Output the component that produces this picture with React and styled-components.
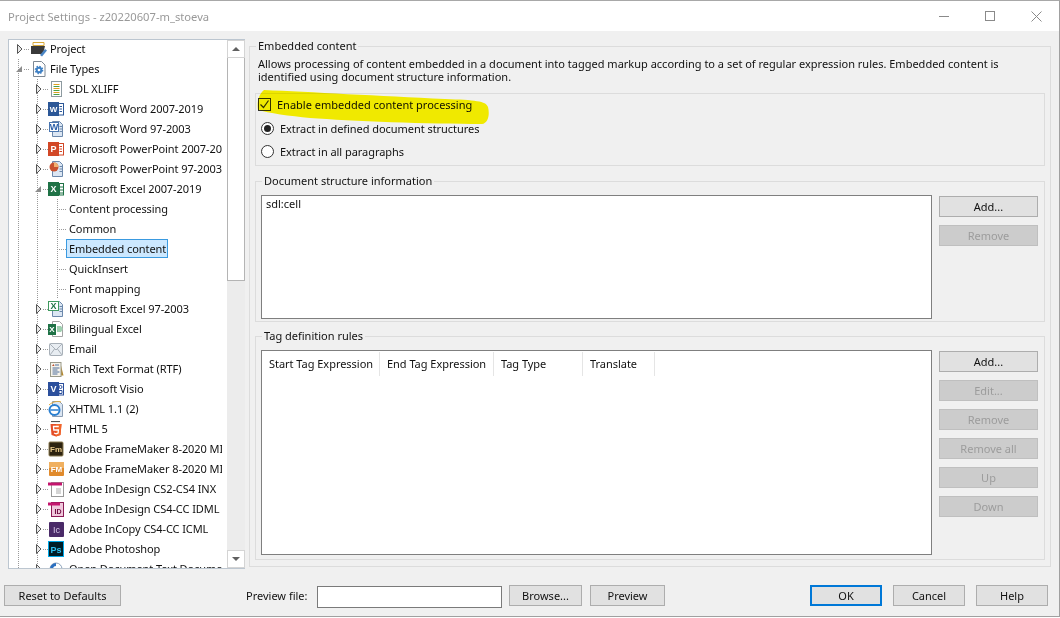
import React from "react";
import styled, { createGlobalStyle } from "styled-components";

const Global = createGlobalStyle`
  html, body { margin: 0; padding: 0; background: #fff; }
  body { font-family: "Noto Sans", "Open Sans", sans-serif; font-size: 11px; color: #111; }
`;

const Win = styled.div`
  width: 1060px; height: 617px; box-sizing: border-box;
  border-top: 1px solid #a8a8a8; border-right: 1px solid #a0a0a0; border-bottom: 1px solid #a0a0a0;
  background: #f0f0f0; display: flex; flex-direction: column; position: relative; overflow: hidden;
`;
const TitleBar = styled.div`
  height: 30px; flex: none; background: #fff; display: flex; align-items: center; padding-left: 8px;
  color: #999; font-size: 11.2px;
`;
const TitleText = styled.span` flex: 1; `;
const Caption = styled.span`
  width: 46px; height: 30px; display: flex; align-items: center; justify-content: center;
`;
const Main = styled.div`
  flex: 1; min-height: 0; display: flex; gap: 4px; padding: 8px 8px 0 8px;
`;
const Tree = styled.div`
  width: 237px; height: 530px; box-sizing: border-box; flex: none; display: flex;
  border: 1px solid #bcc6d0; background: #fff;
`;
const TreeList = styled.div`
  width: 213px; margin: -1px 5px 0 0; overflow: hidden; flex: none;
`;

const dots = (x) =>
  `linear-gradient(#9a9a9a 50%, transparent 50%) ${x}px 0 / 1px 2px repeat-y`;
const Row = styled.div`
  height: 20px; display: flex; align-items: center; white-space: nowrap; box-sizing: border-box;
  padding-left: ${(p) => p.$pad}px;
  background: ${(p) => p.$guides.map(dots).join(",") || "none"};
`;
const Expander = styled.svg` width: ${(p) => p.$w}px; height: 10px; flex: none; margin-left: ${(p) => p.$ml}px; `;
const Tick = styled.span`
  flex: none; width: ${(p) => p.$w}px; margin: 0 ${(p) => p.$mr}px 0 ${(p) => p.$ml}px; height: 1px;
  background: repeating-linear-gradient(90deg, #9a9a9a 0 1px, transparent 1px 2px);
`;
const IconBox = styled.svg` width: 16px; height: 16px; flex: none; margin-right: ${(p) => p.$mr}px; `;
const Label = styled.span`
  flex: none; line-height: 17px; letter-spacing: -0.08px; margin-top: -2px;
  ${(p) => p.$selected && `
    background: #cce8ff; border: 1px solid #3a9ae0; height: 17px; margin-left: -3px; padding: 0 0 0 2px; width: 98px;
  `}
`;
const Scroll = styled.div`
  width: 18px; flex: none; background: #ececec; display: flex; flex-direction: column;
`;
const ScrollBtn = styled.div`
  height: 18px; flex: none; background: #fff; border: 1px solid #d4d4d4; box-sizing: border-box;
  display: flex; align-items: center; justify-content: center;
`;
const Arrow = styled.span`
  width: 0; height: 0; border-left: 4px solid transparent; border-right: 4px solid transparent;
  ${(p) => (p.$up ? "border-bottom: 4px solid #606060;" : "border-top: 4px solid #606060;")}
`;
const Thumb = styled.div`
  height: 223px; flex: none; background: #fff; border: 1px solid #b4b4b4; border-top: none; box-sizing: border-box;
`;
const Track = styled.div` flex: 1; `;

const Group = styled.fieldset`
  margin: 0; padding: ${(p) => p.$pad}; border: 1px solid #dcdcdc; min-width: 0; box-sizing: border-box;
  ${(p) => p.$outer && "width: 802px; height: 528px; flex: none;"}
  ${(p) => p.$h && `height: ${p.$h}px; flex: none;`}
  ${(p) => p.$mt && `margin-top: ${p.$mt}px;`}
`;
const Legend = styled.legend`
  margin-left: 1px; padding: 0 2px; line-height: 14px; color: #111;
`;
const Desc = styled.div` line-height: 13px; margin: 4px 0 0 3px; height: 26px; `;
const OptionPanel = styled.div`
  margin-top: 10px; height: 73px; border: 1px solid #dcdcdc; box-sizing: border-box;
  display: flex; flex-direction: column; padding: 3px 0 0 2px;
`;
const CheckRow = styled.label` display: flex; align-items: center; height: 14px; gap: 6px; `;
const CheckBoxBox = styled.span`
  width: 13px; height: 13px; box-sizing: border-box; border: 1px solid #333; display: flex; flex: none;
  align-items: center; justify-content: center;
`;
const RadioRow = styled.label`
  display: flex; align-items: center; height: 14px; gap: 6px; margin: ${(p) => p.$mt}px 0 0 3px; letter-spacing: -0.05px;
`;
const Radio = styled.span`
  width: 13px; height: 13px; box-sizing: border-box; border: 1px solid #333; border-radius: 50%;
  background: #fff; display: flex; align-items: center; justify-content: center; flex: none;
  &::after { content: ""; width: 7px; height: 7px; border-radius: 50%; background: ${(p) => (p.$on ? "#222" : "transparent")}; }
`;
const Split = styled.div` display: flex; gap: 7px; `;
const ListBox = styled.div`
  width: 671px; height: ${(p) => p.$h}px; box-sizing: border-box; flex: none; line-height: 15px;
  border: 1px solid #7f7f7f; background: #fff; padding: ${(p) => p.$pad};
`;
const Header = styled.div` display: flex; height: 24px; `;
const Col = styled.div`
  width: ${(p) => p.$w}px; box-sizing: border-box; padding-left: 7px; border-right: 1px solid #e5e5e5;
  line-height: 24px; flex: none; white-space: nowrap; letter-spacing: -0.03px;
`;
const Buttons = styled.div` display: flex; flex-direction: column; gap: 8px; padding-top: 1px; `;
const Btn = styled.button`
  font: inherit; color: ${(p) => (p.disabled ? "#9c9c9c" : "#111")};
  width: ${(p) => p.$w || 99}px; height: 21px; padding: 0; flex: none; box-sizing: border-box;
  background: ${(p) => (p.disabled ? "#cccccc" : "#e1e1e1")};
  border: ${(p) => (p.$primary ? "2px solid #0078d7" : p.disabled ? "1px solid #bfbfbf" : "1px solid #adadad")};
  margin-left: ${(p) => p.$ml || 0}px; border-radius: 0;
`;
const Footer = styled.div` height: 49px; box-sizing: border-box; flex: none; display: flex; align-items: flex-start; padding: 18px 0 0 4px; `;
const FooterLabel = styled.span` margin-left: 125px; width: 71px; flex: none; line-height: 22px; `;
const Input = styled.div`
  width: 185px; height: 22px; margin-top: 1px; box-sizing: border-box; background: #fff; border: 1px solid #7a7a7a; flex: none;
`;
const Highlight = styled.svg`
  position: absolute; left: 250px; top: 84px; width: 245px; height: 45px; mix-blend-mode: multiply; pointer-events: none;
`;

/* ---- small drawn file-type icons ---- */
const Doc = ({ fill = "#fff", stroke = "#9aa3ad" }) => (
  <path d="M4.5 .5h7l3 3v12h-10z" fill={fill} stroke={stroke} />
);
const Tile = ({ c, t, x = 0, y = 3, w = 11, h = 11, tc = "#fff", fs = 8 }) => (
  <>
    <rect x={x} y={y} width={w} height={h} fill={c} />
    <text x={x + w / 2} y={y + h / 2 + fs * 0.36} fontSize={fs} fontWeight="700" fontFamily="Liberation Sans, sans-serif" textAnchor="middle" fill={tc}>{t}</text>
  </>
);
const Lines = ({ c = "#7c8ea5" }) => (
  <path d="M11.500 5.500h2.500M11.500 8h2.500M11.500 10.500h2.500" stroke={c} fill="none" />
);
const icons = {
  project: (
    <>
      <path d="M2 1.500h11v3H2z" fill="#fff" stroke="#d9a93a" />
      <path d="M0 5h14l-2 8H0z" fill="#3a3a3a" />
      <path d="M9 14l5-6 2 1.500-5 6z" fill="#4a86c5" />
    </>
  ),
  filetypes: (
    <>
      <path d="M2.500 .5h8l3.500 3.500v11.500h-11.500z" fill="#fff" stroke="#7d8894" />
      <circle cx="8" cy="9" r="3.300" fill="#3d7fc4" />
      <circle cx="8" cy="9" r="3.600" fill="none" stroke="#3d7fc4" strokeWidth="1.400" strokeDasharray="1.500 1.300" />
      <circle cx="8" cy="9" r="1.300" fill="#fff" />
    </>
  ),
  xliff: (
    <>
      <rect x="3.500" y=".5" width="10" height="15" fill="#fff" stroke="#8d9aa0" />
      <path d="M5.500 3.500h6" stroke="#e0a020" />
      <path d="M5.500 5.500h6" stroke="#4aa14a" />
      <path d="M5.500 7.500h6" stroke="#e0a020" />
      <path d="M5.500 9.500h6" stroke="#4aa14a" />
      <path d="M5.500 11.500h6" stroke="#e0a020" />
      <path d="M5.500 13.500h6" stroke="#4aa14a" />
    </>
  ),
  word: (
    <>
      <rect x="8" y="2.500" width="7.500" height="11.500" fill="#fff" stroke="#2b5797" />
      <Lines c="#2b5797" />
      <Tile c="#2b5797" t="W" y={1} w={11} h={14} fs={8} />
    </>
  ),
  word97: (
    <>
      <Doc fill="#dbe6f3" stroke="#6c88ab" />
      <Lines c="#6c88ab" />
      <Tile c="#fff" t="W" x={1} y={1} w={10} h={10} tc="#2b5fa8" fs={9} />
      <rect x="1.500" y="1.500" width="9" height="9" fill="none" stroke="#4a76b0" />
    </>
  ),
  ppt: (
    <>
      <rect x="8" y="2.500" width="7.500" height="11.500" fill="#fff" stroke="#d24726" />
      <Lines c="#d24726" />
      <Tile c="#d24726" t="P" y={1} w={11} h={14} fs={9} />
    </>
  ),
  ppt97: (
    <>
      <Doc fill="#dbe6f3" stroke="#6c88ab" />
      <Lines c="#6c88ab" />
      <circle cx="6" cy="6" r="4.500" fill="#c8502e" />
      <path d="M6 6V1.500A4.500 4.500 0 0 1 10.500 6z" fill="#f0b070" />
    </>
  ),
  excel: (
    <>
      <rect x="8" y="2.500" width="7.500" height="11.500" fill="#fff" stroke="#1f7246" />
      <path d="M11.500 3v11M8 6h7M8 9h7M8 12h7" stroke="#1f7246" />
      <Tile c="#1f7246" t="X" y={1} w={11} h={14} fs={9} />
    </>
  ),
  excel97: (
    <>
      <Doc fill="#dbe6f3" stroke="#6c88ab" />
      <Lines c="#6c88ab" />
      <Tile c="#fff" t="X" x={0} y={0} w={11} h={10} tc="#1f7246" fs={9} />
      <rect x=".5" y=".5" width="10" height="9" fill="none" stroke="#3f9a5f" />
    </>
  ),
  bilingual: (
    <>
      <Doc fill="#fff" stroke="#a4a4a4" />
      <path d="M9 5h4l2 3-2 3H9z" fill="#9fd0b0" />
      <Tile c="#1f7246" t="X" y={3} w={8} h={11} fs={8} />
    </>
  ),
  email: (
    <>
      <rect x="1.500" y="2.500" width="13" height="12" rx="1" fill="#e8edf2" stroke="#a8b0b8" />
      <path d="M2 3l6 6 6-6M2 14l4.500-6M14 14l-4.500-6" stroke="#a8b0b8" fill="none" />
    </>
  ),
  rtf: (
    <>
      <path d="M12 .5l3.500 14H13z" fill="#b5892f" />
      <rect x="2.500" y="1.500" width="10.500" height="14" fill="#f6f3ea" stroke="#9a9a8a" />
      <path d="M7 4h4M4.500 7h7M4.500 9h5M4.500 11h7M4.500 13h5" stroke="#4f6e9c" fill="none" />
      <path d="M4 5l1.500-2L6.500 5z" fill="#c05030" />
    </>
  ),
  visio: (
    <>
      <rect x="8" y="2.500" width="7.500" height="11.500" fill="#fff" stroke="#2b4f9c" />
      <circle cx="12.500" cy="6" r="1.500" fill="none" stroke="#2b4f9c" />
      <path d="M11 9.500h3v3h-3z" fill="none" stroke="#2b4f9c" />
      <Tile c="#2b4f9c" t="V" y={1} w={11} h={14} fs={9} />
    </>
  ),
  xhtml: (
    <>
      <Doc fill="#dbe6f3" stroke="#8a9cb2" />
      <circle cx="6.500" cy="9" r="5" fill="#fff" stroke="#2a7fd0" strokeWidth="2" />
      <path d="M2.500 9h8" stroke="#2a7fd0" strokeWidth="1.500" />
      <path d="M1 4c4-4 10-4 12-3" stroke="#e0a93a" fill="none" />
    </>
  ),
  html5: (
    <>
      <path d="M3 .5h9" stroke="#555" strokeWidth="1.200" />
      <path d="M2.500 3h11l-1 11-4.500 1.500L3.500 14z" fill="#e44d26" />
      <path d="M8 3h5.500l-1 11L8 15.500z" fill="#f16529" />
      <path d="M10.800 5.500H5.500l.3 3.500h4.600l-.3 3L8 12.800 6 12" stroke="#fff" strokeWidth="1.300" fill="none" />
    </>
  ),
  fm: (
    <>
      <rect x="1" y="1" width="14" height="14" rx="1" fill="#2d2310" stroke="#8a7a50" />
      <text x="8" y="11" fontSize="8" fontWeight="700" fontFamily="Liberation Sans, sans-serif" textAnchor="middle" fill="#e8c98a">Fm</text>
    </>
  ),
  fmo: (
    <>
      <rect x="1" y="1" width="15" height="14" rx="1" fill="#e08a2c" />
      <rect x="1" y="1" width="15" height="6" fill="#f0b060" />
      <text x="8.500" y="11" fontSize="8" fontWeight="700" fontFamily="Liberation Sans, sans-serif" textAnchor="middle" fill="#fff">FM</text>
    </>
  ),
  indd: (
    <>
      <rect x="3.500" y="1.500" width="12" height="14" fill="#fff" stroke="#999" />
      <path d="M0 1.500h14v3H0z" fill="#c4166e" />
      <path d="M8 8h5M8 10h5M8 12h5" stroke="#aaa" />
    </>
  ),
  idml: (
    <>
      <rect x="3.500" y="1.500" width="12" height="14" fill="#f0c8dc" stroke="#8a1a55" />
      <path d="M0 1.500h12v3H0z" fill="#c4166e" />
      <text x="10" y="13" fontSize="7" fontWeight="700" fontFamily="Liberation Sans, sans-serif" textAnchor="middle" fill="#6e0d40">ID</text>
    </>
  ),
  ic: (
    <>
      <rect x="1" y="1" width="15" height="15" rx="1" fill="#4a2a68" />
      <text x="8.500" y="12" fontSize="9" fontFamily="Liberation Sans, sans-serif" textAnchor="middle" fill="#d8c8e8">Ic</text>
    </>
  ),
  ps: (
    <>
      <rect x=".5" y=".5" width="15" height="15" fill="#001d26" stroke="#00a8e8" />
      <text x="8" y="12" fontSize="9" fontWeight="700" fontFamily="Liberation Sans, sans-serif" textAnchor="middle" fill="#2fc0f0">Ps</text>
    </>
  ),
  open: (
    <>
      <circle cx="8" cy="8" r="6" fill="#fff" stroke="#8aa0b8" />
      <path d="M2 8a6 6 0 0 1 6-6v3a3 3 0 0 0-3 3z" fill="#2a6fc0" />
    </>
  ),
};

const Collapsed = () => (
  <Expander viewBox="0 0 6 10" $w={6} $ml={0}>
    <path d="M.5 .5v9L5 5z" fill="#e8e8e8" stroke="#555" />
  </Expander>
);
const Expanded = () => (
  <Expander viewBox="0 0 7 10" $w={7} $ml={-1}>
    <path d="M0 8L6 2v6z" fill="#8c8c8c" />
  </Expander>
);

/* guides are measured from the tree's inner left edge (x=9) */
const G0 = 9, G1 = 28, G2 = 48;
const rows = [
  { l: 0, i: "project", t: "Project", g: [] , e: "c" },
  { l: 0, i: "filetypes", t: "File Types", g: [G0], e: "o" },
  { l: 1, i: "xliff", t: "SDL XLIFF", g: [G0, G1], e: "c" },
  { l: 1, i: "word", t: "Microsoft Word 2007-2019", g: [G0, G1], e: "c" },
  { l: 1, i: "word97", t: "Microsoft Word 97-2003", g: [G0, G1], e: "c" },
  { l: 1, i: "ppt", t: "Microsoft PowerPoint 2007-2019", g: [G0, G1], e: "c" },
  { l: 1, i: "ppt97", t: "Microsoft PowerPoint 97-2003", g: [G0, G1], e: "c" },
  { l: 1, i: "excel", t: "Microsoft Excel 2007-2019", g: [G0, G1], e: "o" },
  { l: 2, t: "Content processing", g: [G0, G1, G2] },
  { l: 2, t: "Common", g: [G0, G1, G2] },
  { l: 2, t: "Embedded content", g: [G0, G1, G2], s: true },
  { l: 2, t: "QuickInsert", g: [G0, G1, G2] },
  { l: 2, t: "Font mapping", g: [G0, G1, G2] },
  { l: 1, i: "excel97", t: "Microsoft Excel 97-2003", g: [G0, G1], e: "c" },
  { l: 1, i: "bilingual", t: "Bilingual Excel", g: [G0, G1], e: "c" },
  { l: 1, i: "email", t: "Email", g: [G0, G1], e: "c" },
  { l: 1, i: "rtf", t: "Rich Text Format (RTF)", g: [G0, G1], e: "c" },
  { l: 1, i: "visio", t: "Microsoft Visio", g: [G0, G1], e: "c" },
  { l: 1, i: "xhtml", t: "XHTML 1.1 (2)", g: [G0, G1], e: "c" },
  { l: 1, i: "html5", t: "HTML 5", g: [G0, G1], e: "c" },
  { l: 1, i: "fm", t: "Adobe FrameMaker 8-2020 MIF", g: [G0, G1], e: "c" },
  { l: 1, i: "fmo", t: "Adobe FrameMaker 8-2020 MIF", g: [G0, G1], e: "c" },
  { l: 1, i: "indd", t: "Adobe InDesign CS2-CS4 INX", g: [G0, G1], e: "c" },
  { l: 1, i: "idml", t: "Adobe InDesign CS4-CC IDML", g: [G0, G1], e: "c" },
  { l: 1, i: "ic", t: "Adobe InCopy CS4-CC ICML", g: [G0, G1], e: "c" },
  { l: 1, i: "ps", t: "Adobe Photoshop", g: [G0, G1], e: "c" },
  { l: 1, i: "open", t: "Open Document Text Document", g: [G0, G1], e: "c" },
];

const TreeRow = ({ r }) => {
  if (r.l === 2) {
    return (
      <Row $pad={48} $guides={r.g}>
        <Tick $w={10} $ml={0} $mr={2} />
        <Label $selected={r.s}>{r.t}</Label>
      </Row>
    );
  }
  return (
    <Row $pad={r.l === 0 ? 8 : 27} $guides={r.g}>
      {r.e === "c" ? <Collapsed /> : <Expanded />}
      <Tick $w={5} $ml={1} $mr={r.l === 0 ? 2 : 0} />
      <IconBox viewBox="0 0 16 16" $mr={r.l === 0 ? 3 : 5}>{icons[r.i]}</IconBox>
      <Label>{r.t}</Label>
    </Row>
  );
};

export default function App() {
  return (
    <>
      <Global />
      <Win>
        <TitleBar>
          <TitleText>Project Settings - z20220607-m_stoeva</TitleText>
          <Caption>
            <svg width="10" height="10" viewBox="0 0 10 10"><path d="M0 5.500h10" stroke="#8a8a8a" /></svg>
          </Caption>
          <Caption>
            <svg width="10" height="10" viewBox="0 0 10 10"><rect x=".5" y=".5" width="9" height="9" fill="none" stroke="#8a8a8a" /></svg>
          </Caption>
          <Caption>
            <svg width="11" height="11" viewBox="0 0 11 11"><path d="M.5 .5l10 10M10.500 .5l-10 10" stroke="#8a8a8a" /></svg>
          </Caption>
        </TitleBar>
        <Main>
          <Tree>
            <TreeList>
              {rows.map((r, i) => <TreeRow key={i} r={r} />)}
            </TreeList>
            <Scroll>
              <ScrollBtn><Arrow $up /></ScrollBtn>
              <Thumb />
              <Track />
              <ScrollBtn><Arrow /></ScrollBtn>
            </Scroll>
          </Tree>
          <Group $outer $pad="0 5px 0 5px">
            <Legend>Embedded content</Legend>
            <Desc>
              Allows processing of content embedded in a document into tagged markup according to a set of regular expression rules. Embedded content is<br />
              identified using document structure information.
            </Desc>
            <OptionPanel>
              <CheckRow>
                <CheckBoxBox>
                  <svg width="11" height="11" viewBox="0 0 11 11"><path d="M1.500 5.500l3 3 5-7" fill="none" stroke="#333" strokeWidth="1.200" /></svg>
                </CheckBoxBox>
                Enable embedded content processing
              </CheckRow>
              <RadioRow $mt={10}><Radio $on />Extract in defined document structures</RadioRow>
              <RadioRow $mt={9}><Radio />Extract in all paragraphs</RadioRow>
            </OptionPanel>
            <Group $pad="7px 6px 0 5px" $mt={8} $h={148}>
              <Legend>Document structure information</Legend>
              <Split>
                <ListBox $h={124} $pad="0 4px">sdl:cell</ListBox>
                <Buttons>
                  <Btn>Add...</Btn>
                  <Btn disabled>Remove</Btn>
                </Buttons>
              </Split>
            </Group>
            <Group $pad="7px 6px 0 5px" $mt={7} $h={231}>
              <Legend>Tag definition rules</Legend>
              <Split>
                <ListBox $h={205} $pad="1px 0 0 0">
                  <Header>
                    <Col $w={118}>Start Tag Expression</Col>
                    <Col $w={114}>End Tag Expression</Col>
                    <Col $w={89}>Tag Type</Col>
                    <Col $w={72}>Translate</Col>
                  </Header>
                </ListBox>
                <Buttons>
                  <Btn>Add...</Btn>
                  <Btn disabled>Edit...</Btn>
                  <Btn disabled>Remove</Btn>
                  <Btn disabled>Remove all</Btn>
                  <Btn disabled>Up</Btn>
                  <Btn disabled>Down</Btn>
                </Buttons>
              </Split>
            </Group>
          </Group>
        </Main>
        <Footer>
          <Btn $w={117}>Reset to Defaults</Btn>
          <FooterLabel>Preview file:</FooterLabel>
          <Input />
          <Btn $w={73} $ml={7}>Browse...</Btn>
          <Btn $w={75} $ml={8}>Preview</Btn>
          <Btn $w={72} $ml={145} $primary>OK</Btn>
          <Btn $w={72} $ml={11}>Cancel</Btn>
          <Btn $w={72} $ml={11}>Help</Btn>
        </Footer>
        <Highlight viewBox="0 0 245 45">
          <path d="M14 5C60 7 130 11 195 14C225 15 236 16 238 22C240 30 238 38 232 39C180 39 100 36 60 33C40 31 18 28 8 25C7 18 8 10 14 5z" fill="#fff800" />
        </Highlight>
      </Win>
    </>
  );
}
